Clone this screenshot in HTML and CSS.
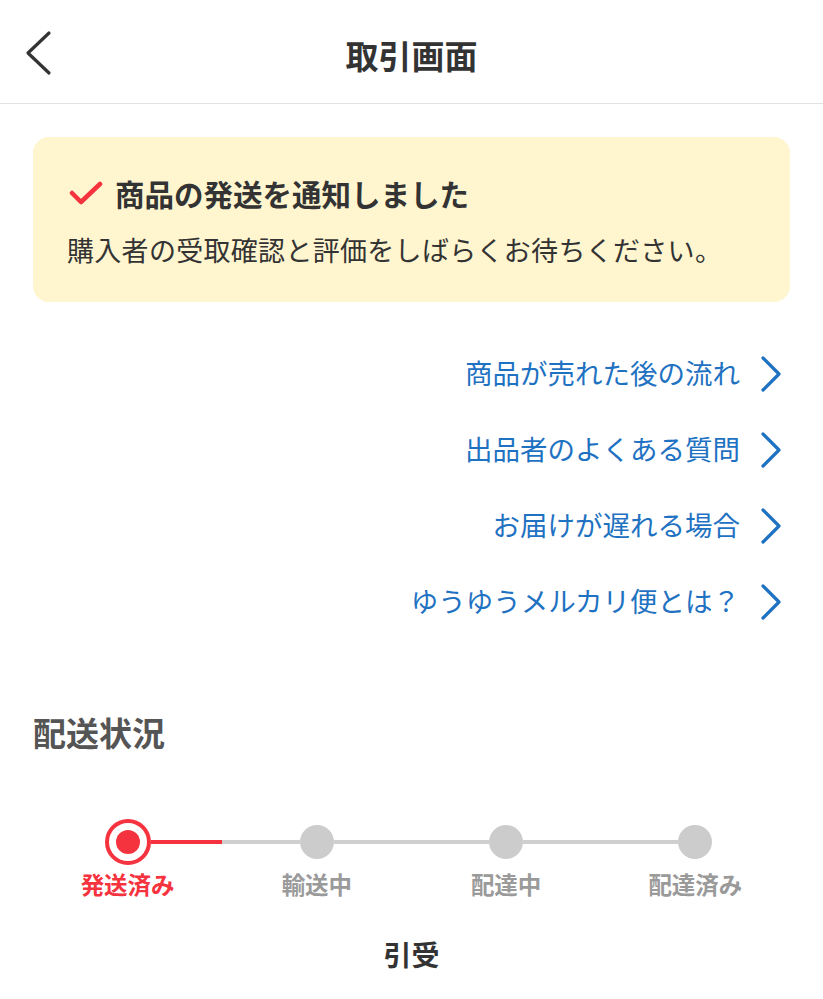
FILE: index.html
```html
<!DOCTYPE html>
<html lang="ja">
<head>
<meta charset="utf-8">
<title>取引画面</title>
<link rel="stylesheet" href="styles.css">
</head>
<body>
<header class="header">
  <button class="back" aria-label="戻る">
    <svg width="32" height="48" viewBox="0 0 32 48"><path d="M26 4 L5 24 L26 44" fill="none" stroke="#333" stroke-width="3.2" stroke-linecap="round" stroke-linejoin="round"/></svg>
  </button>
  <h1 class="title">取引画面</h1>
</header>
<main class="main">
  <section class="notice">
    <div class="notice-head">
      <svg class="check" width="34" height="26" viewBox="0 0 34 26"><path d="M3 13 L12 22 L31 4" fill="none" stroke="#f5333f" stroke-width="4.5" stroke-linecap="round" stroke-linejoin="round"/></svg>
      <span class="notice-title">商品の発送を通知しました</span>
    </div>
    <p class="notice-text">購入者の受取確認と評価をしばらくお待ちください。</p>
  </section>
  <nav class="links">
    <a class="link" href="#"><span>商品が売れた後の流れ</span><svg class="chev" width="22" height="36" viewBox="0 0 22 36"><path d="M3 2 L19 18 L3 34" fill="none" stroke="#1f72c2" stroke-width="3.2" stroke-linecap="round" stroke-linejoin="round"/></svg></a>
    <a class="link" href="#"><span>出品者のよくある質問</span><svg class="chev" width="22" height="36" viewBox="0 0 22 36"><path d="M3 2 L19 18 L3 34" fill="none" stroke="#1f72c2" stroke-width="3.2" stroke-linecap="round" stroke-linejoin="round"/></svg></a>
    <a class="link" href="#"><span>お届けが遅れる場合</span><svg class="chev" width="22" height="36" viewBox="0 0 22 36"><path d="M3 2 L19 18 L3 34" fill="none" stroke="#1f72c2" stroke-width="3.2" stroke-linecap="round" stroke-linejoin="round"/></svg></a>
    <a class="link" href="#"><span>ゆうゆうメルカリ便とは？</span><svg class="chev" width="22" height="36" viewBox="0 0 22 36"><path d="M3 2 L19 18 L3 34" fill="none" stroke="#1f72c2" stroke-width="3.2" stroke-linecap="round" stroke-linejoin="round"/></svg></a>
  </nav>
  <h2 class="section-title">配送状況</h2>
  <ol class="stepper">
    <li class="step step-done">
      <div class="track"><span class="line line-none"></span><span class="dot dot-active"><span class="dot-inner"></span></span><span class="line line-red"></span></div>
      <span class="label label-active">発送済み</span>
    </li>
    <li class="step">
      <div class="track"><span class="line"></span><span class="dot"></span><span class="line"></span></div>
      <span class="label">輸送中</span>
    </li>
    <li class="step">
      <div class="track"><span class="line"></span><span class="dot"></span><span class="line"></span></div>
      <span class="label">配達中</span>
    </li>
    <li class="step">
      <div class="track"><span class="line"></span><span class="dot"></span><span class="line line-none"></span></div>
      <span class="label">配達済み</span>
    </li>
  </ol>
  <p class="status">引受</p>
</main>
</body>
</html>
```
FILE: styles.css
```css
* { box-sizing: border-box; }
html, body { margin: 0; padding: 0; background: #fff; }
body {
  font-family: "Noto Sans CJK JP", "Noto Sans", sans-serif;
  color: #333;
}
.header {
  height: 104px;
  border-bottom: 1px solid #e2e2e2;
  display: flex;
  align-items: center;
  justify-content: center;
  position: relative;
}
.back {
  position: absolute;
  left: 23px;
  top: 29px;
  border: 0;
  background: none;
  padding: 0;
  display: flex;
}
.title {
  margin: 0;
  font-size: 33px;
  font-weight: 700;
  line-height: 40px;
  color: #333;
  position: relative;
  top: 3px;
}
.main { padding: 0 33px; }
.notice {
  margin-top: 33px;
  background: #fff5cf;
  border-radius: 16px;
  padding: 37px 24px 34px 34px;
}
.notice-head {
  display: flex;
  align-items: center;
  gap: 12px;
  height: 38px;
}
.check { margin-left: 2px; flex: none; }
.notice-title {
  font-size: 29.5px;
  font-weight: 700;
  line-height: 38px;
  color: #333;
}
.notice-text {
  margin: 20px 0 0;
  font-size: 27px;
  line-height: 36px;
  color: #333;
  letter-spacing: 0.3px;
}
.links {
  margin-top: 34px;
  display: flex;
  flex-direction: column;
}
.link {
  height: 76px;
  display: flex;
  align-items: center;
  justify-content: flex-end;
  gap: 20px;
  text-decoration: none;
  color: #1f72c2;
  font-size: 27.5px;
  line-height: 36px;
  padding-right: 8px;
}
.link span { position: relative; top: -2px; }
.chev { display: block; }
.section-title {
  margin: 70px 0 0;
  font-size: 33px;
  line-height: 44px;
  font-weight: 700;
  color: #555;
}
.stepper {
  list-style: none;
  margin: 63px 0 0;
  padding: 0;
  display: grid;
  grid-template-columns: repeat(4, 1fr);
}
.step {
  display: flex;
  flex-direction: column;
  align-items: center;
}
.track {
  width: 100%;
  height: 50px;
  display: flex;
  align-items: center;
}
.line {
  flex: 1;
  height: 4px;
  background: #cfcfcf;
}
.line-none { background: transparent; }
.line-red { background: #f5333f; }
.dot {
  width: 34px;
  height: 34px;
  border-radius: 50%;
  background: #cccccc;
  flex: none;
}
.dot-active {
  width: 46px;
  height: 46px;
  background: #fff;
  border: 4px solid #f5333f;
  display: flex;
  align-items: center;
  justify-content: center;
}
.dot-inner {
  width: 24px;
  height: 24px;
  border-radius: 50%;
  background: #f5333f;
}
.label {
  margin-top: 2px;
  font-size: 23.5px;
  line-height: 30px;
  font-weight: 700;
  color: #9a9a9a;
}
.label-active { color: #f5333f; }
.status {
  margin: 35px 0 0;
  text-align: center;
  font-size: 28px;
  line-height: 40px;
  font-weight: 700;
  color: #333;
}
```
